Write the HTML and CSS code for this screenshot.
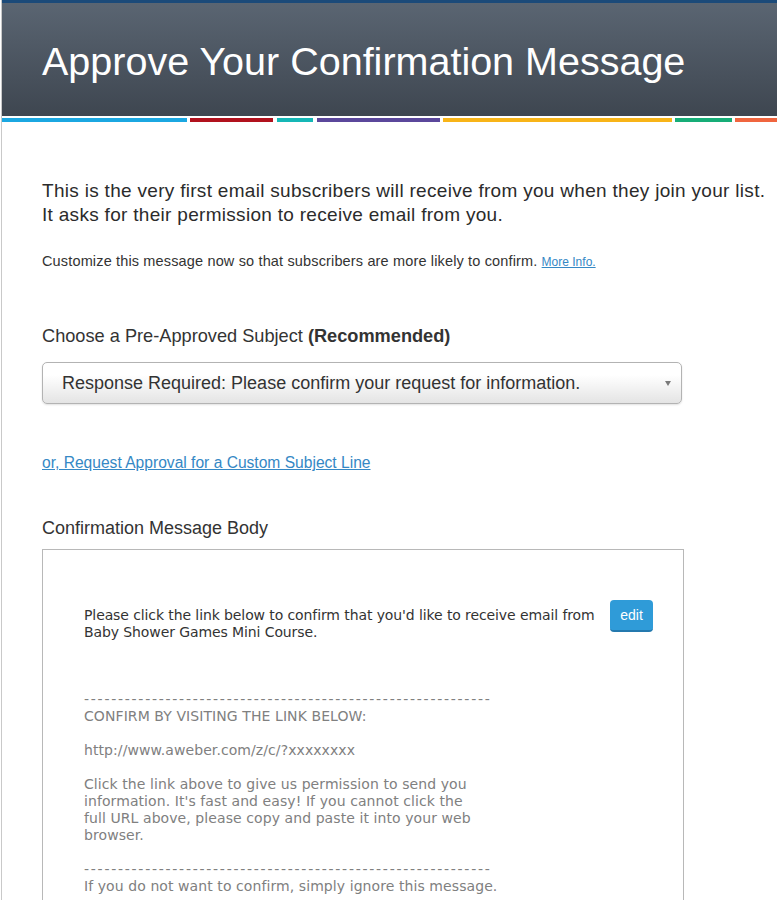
FILE: index.html
```html
<!DOCTYPE html>
<html lang="en">
<head>
<meta charset="utf-8">
<title>Approve Your Confirmation Message</title>
<link rel="stylesheet" href="styles.css">
</head>
<body>
<div class="page">
  <header class="hero">
    <h1 class="hero-title">Approve Your Confirmation Message</h1>
  </header>
  <div class="stripes">
    <span class="stripe s-cyan"></span>
    <span class="stripe s-red"></span>
    <span class="stripe s-teal"></span>
    <span class="stripe s-purple"></span>
    <span class="stripe s-yellow"></span>
    <span class="stripe s-green"></span>
    <span class="stripe s-orange"></span>
  </div>

  <main class="content">
    <p class="lead">This is the very first email subscribers will receive from you when they join your list.<br>It asks for their permission to receive email from you.</p>
    <p class="note">Customize this message now so that subscribers are more likely to confirm. <a href="#" class="more">More Info.</a></p>

    <h2 class="label">Choose a Pre-Approved Subject <strong>(Recommended)</strong></h2>
    <div class="select-box">
      <span class="select-text">Response Required: Please confirm your request for information.</span>
      <span class="select-arrow"></span>
    </div>

    <a href="#" class="custom-link">or, Request Approval for a Custom Subject Line</a>

    <h2 class="label label-body">Confirmation Message Body</h2>
    <div class="msg-box">
      <div class="msg-row">
        <p class="msg-intro">Please click the link below to confirm that you'd like to receive email from<br>Baby Shower Games Mini Course.</p>
        <button class="edit-btn" type="button">edit</button>
      </div>
      <div class="msg-plain"><span class="rule">------------------------------------------------------------</span>
CONFIRM BY VISITING THE LINK BELOW:

http://www.aweber.com/z/c/?xxxxxxxx

Click the link above to give us permission to send you
information. It's fast and easy! If you cannot click the
full URL above, please copy and paste it into your web
browser.

<span class="rule">------------------------------------------------------------</span>
If you do not want to confirm, simply ignore this message.</div>
    </div>
  </main>
</div>
</body>
</html>
```

FILE: styles.css
```css
html, body {
  margin: 0;
  padding: 0;
  background: #fff;
}

body {
  font-family: "Liberation Sans", Arial, sans-serif;
  color: #333;
  overflow: hidden;
}

.page {
  margin-left: 1px;
  border-left: 1px solid #c9c9c9;
  min-height: 900px;
}

.hero {
  border-top: 3px solid #1b4a79;
  background: linear-gradient(#5a6572, #3e4650);
  padding: 36px 0 32px 40px;
}

.hero-title {
  margin: 0;
  color: #fff;
  font-weight: normal;
  font-size: 39.5px;
  line-height: 45px;
}

.stripes {
  display: flex;
  margin-top: 2px;
  height: 4px;
}

.stripe {
  display: block;
  height: 4px;
  margin-right: 3px;
}
.s-cyan { width: 185px; background: #1ba7e1; }
.s-red { width: 83px; background: #b1111d; margin-right: 4px; }
.s-teal { width: 36px; background: #15b7b6; margin-right: 4px; }
.s-purple { width: 123px; background: #5b479b; }
.s-yellow { width: 229px; background: #f8b418; }
.s-green { width: 57px; background: #17ad77; }
.s-orange { flex: 1; background: #f0653f; margin-right: 0; }

.content {
  padding: 57px 0 0 40px;
}

.lead {
  margin: 0;
  font-size: 19px;
  letter-spacing: 0.3px;
  line-height: 24px;
  color: #2b2b2b;
  white-space: nowrap;
}

.note {
  margin: 24px 0 0;
  font-size: 14.5px;
  letter-spacing: 0.15px;
  line-height: 20px;
  color: #333;
}

.more {
  font-size: 12px;
  letter-spacing: 0;
  color: #3588c5;
}

.label {
  margin: 52px 0 0;
  font-weight: normal;
  font-size: 18.2px;
  line-height: 24px;
  color: #333;
}

.label strong {
  font-weight: bold;
  color: #333;
}

.select-box {
  margin-top: 14px;
  box-sizing: content-box;
  width: 609px;
  height: 40px;
  border: 1px solid #b3b3b3;
  border-radius: 5px;
  background: linear-gradient(#ffffff 30%, #e4e4e4);
  box-shadow: 0 1px 2px rgba(0, 0, 0, 0.12);
  display: flex;
  align-items: center;
  justify-content: space-between;
  padding: 0 10px 0 19px;
}

.select-text {
  font-size: 18px;
  color: #333;
}

.select-arrow {
  width: 0;
  height: 0;
  border-left: 3px solid transparent;
  border-right: 3px solid transparent;
  border-top: 5px solid #7a7a7a;
}

.custom-link {
  display: block;
  margin-top: 48px;
  font-size: 15.6px;
  line-height: 22px;
  color: #3588c5;
  width: max-content;
}

.label-body {
  margin-top: 42px;
  font-size: 18px;
}

.msg-box {
  margin-top: 9px;
  width: 569px;
  border: 1px solid #b8b8b8;
  padding: 50px 30px 40px 41px;
  font-family: "DejaVu Sans", Tahoma, Verdana, sans-serif;
  font-size: 14px;
  line-height: 17px;
}

.msg-row {
  display: flex;
  justify-content: space-between;
  align-items: flex-start;
}

.msg-intro {
  margin: 7px 0 0;
  color: #333;
  letter-spacing: -0.1px;
}

.edit-btn {
  flex: none;
  width: 43px;
  height: 32px;
  border: 0;
  border-bottom: 2px solid #2479ae;
  border-radius: 4px;
  background: #2f9bd8;
  color: #fff;
  font-family: "Liberation Sans", Arial, sans-serif;
  font-size: 14px;
  padding: 0;
}

.msg-plain {
  margin-top: 50px;
  white-space: pre-line;
  color: #808080;
  letter-spacing: 0.08px;
}

.rule {
  letter-spacing: 1.74px;
}
```
